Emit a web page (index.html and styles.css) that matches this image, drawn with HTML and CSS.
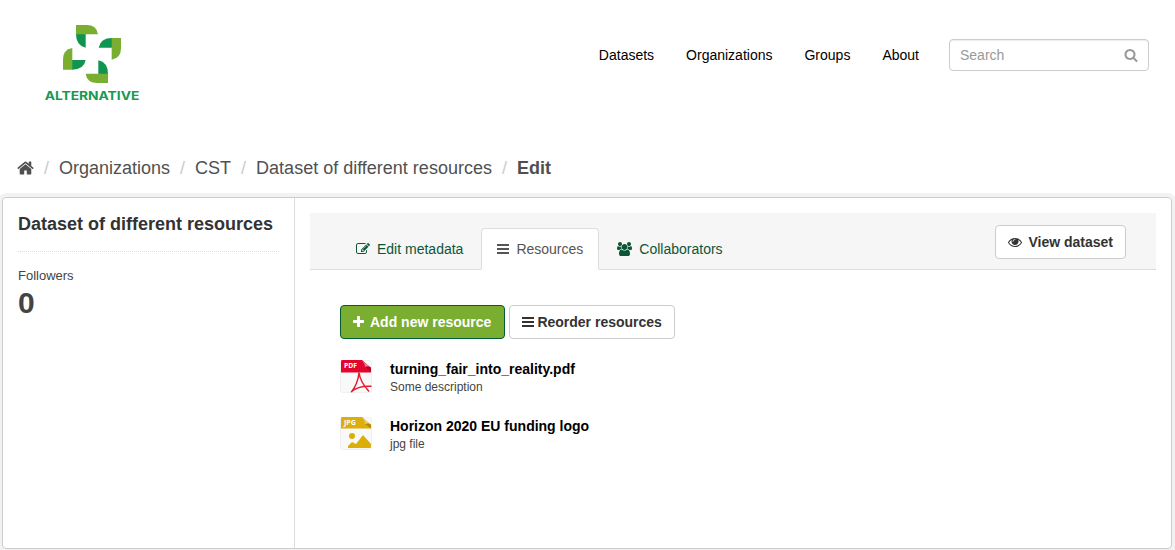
FILE: index.html
```html
<!DOCTYPE html>
<html lang="en">
<head>
<meta charset="utf-8">
<title>Dataset of different resources - Edit</title>
<link rel="stylesheet" href="styles.css">
</head>
<body>
<svg class="sprite" aria-hidden="true">
  <symbol id="home" viewBox="64 0 1664 1792"><path d="M1472 992v480q0 26-19 45t-45 19h-384v-384h-256v384h-384q-26 0-45-19t-19-45v-480q0-1 .5-3t.5-3l575-474 575 474q1 2 1 6zm223-69l-62 74q-8 9-21 11h-3q-13 0-21-7l-692-577-692 577q-12 8-24 7-13-2-21-11l-62-74q-8-10-7-23.5t11-21.5l719-599q32-26 76-26t76 26l244 204v-195q0-14 9-23t23-9h192q14 0 23 9t9 23v408l219 182q10 8 11 21.5t-7 23.5z"/></symbol>
  <symbol id="search" viewBox="0 0 1792 1792"><path d="M1216 832q0-185-131.5-316.5t-316.5-131.5-316.5 131.5-131.5 316.5 131.5 316.5 316.5 131.5 316.5-131.5 131.5-316.5zm512 832q0 52-38 90t-90 38q-54 0-90-38l-343-342q-179 124-399 124-143 0-273.5-55.5t-225-150-150-225-55.5-273.5 55.5-273.5 150-225 225-150 273.5-55.5 273.5 55.5 225 150 150 225 55.5 273.5q0 220-124 399l343 343q37 37 37 90z"/></symbol>
  <symbol id="eye" viewBox="0 0 1792 1792"><path d="M1664 960q-152-236-381-353 61 104 61 225 0 185-131.5 316.5t-316.5 131.5-316.5-131.5-131.5-316.5q0-121 61-225-229 117-381 353 133 205 333.5 326.5t434.5 121.5 434.5-121.5 333.5-326.5zm-720-384q0-20-14-34t-34-14q-125 0-214.5 89.5t-89.5 214.5q0 20 14 34t34 14 34-14 14-34q0-86 61-147t147-61q20 0 34-14t14-34zm848 384q0 34-20 69-140 230-376.5 368.5t-499.5 138.5-499.5-139-376.5-368q-20-35-20-69t20-69q140-229 376.5-368t499.5-139 499.5 139 376.5 368q20 35 20 69z"/></symbol>
  <symbol id="plus" viewBox="192 0 1408 1792"><path d="M1600 736v192q0 40-28 68t-68 28h-416v416q0 40-28 68t-68 28h-192q-40 0-68-28t-28-68v-416h-416q-40 0-68-28t-28-68v-192q0-40 28-68t68-28h416v-416q0-40 28-68t68-28h192q40 0 68 28t28 68v416h416q40 0 68 28t28 68z"/></symbol>
  <symbol id="bars" viewBox="0 0 12 14"><path d="M0 2h12v2H0zM0 6h12v2H0zM0 10h12v2H0z"/></symbol>
  <symbol id="edit" viewBox="0 0 1792 1792"><path d="M888 1184l116-116-152-152-116 116v56h96v96h56zm440-720q-16-16-33 1l-350 350q-17 17-1 33t33-1l350-350q17-17 1-33zm80 594v190q0 119-84.5 203.5t-203.5 84.5h-832q-119 0-203.5-84.5t-84.5-203.5v-832q0-119 84.5-203.5t203.5-84.5h832q63 0 117 25 15 7 18 23 3 17-9 29l-49 49q-14 14-32 8-23-6-45-6h-832q-66 0-113 47t-47 113v832q0 66 47 113t113 47h832q66 0 113-47t47-113v-126q0-13 9-22l64-64q15-15 35-7t20 29zm-96-738l288 288-672 672h-288v-288zm444 132l-92 92-288-288 92-92q28-28 68-28t68 28l152 152q28 28 28 68t-28 68z"/></symbol>
  <symbol id="users" viewBox="64 0 1920 1792"><path d="M657 896q-162 5-265 128h-134q-82 0-138-40.5t-56-118.5q0-353 124-353 6 0 43.5 21t97.5 42.5 119 21.5q67 0 133-23-5 37-5 66 0 139 81 256zm1071 637q0 120-73 189.5t-194 69.5h-874q-121 0-194-69.5t-73-189.5q0-53 3.5-103.5t14-109 26.5-108.5 43-97.5 62-81 85.5-53.5 111.5-20q10 0 43 21.5t73 48 107 48 135 21.5 135-21.5 107-48 73-48 43-21.5q61 0 111.5 20t85.5 53.5 62 81 43 97.5 26.5 108.5 14 109 3.5 103.5zm-1024-1277q0 106-75 181t-181 75-181-75-75-181 75-181 181-75 181 75 75 181zm704 384q0 159-112.5 271.5t-271.5 112.5-271.5-112.5-112.5-271.5 112.5-271.5 271.5-112.5 271.5 112.5 112.5 271.5zm576 225q0 78-56 118.5t-138 40.5h-134q-103-123-265-128 81-117 81-256 0-29-5-66 66 23 133 23 59 0 119-21.5t97.5-42.5 43.5-21q124 0 124 353zm-128-609q0 106-75 181t-181 75-181-75-75-181 75-181 181-75 181 75 75 181z"/></symbol>
</svg>

<header class="masthead">
  <a class="logo">
    <svg width="120" height="95" viewBox="0 0 360 285" role="img" aria-label="Alternative">
      <g fill="#0f9550">
        <path d="M123 57h29v41q-29-6-29-41z"/>
        <path d="M231 69v29h-40q5-29 40-29z"/>
        <path d="M219 177h-29v-41q29 6 29 41z"/>
        <path d="M111 164v-29h41q-5 29-41 29z"/>
      </g>
      <g fill="#7aae30">
        <path d="M123 30h32q30 0 34 28h-66z"/>
        <path d="M258 69v31q0 30-28 34v-65z"/>
        <path d="M219 204h-32q-31 0-35-28h67z"/>
        <path d="M84 164v-31q0-29 28-34v65z"/>
      </g>
      <text class="logo-text" x="29" y="255" textLength="284" lengthAdjust="spacingAndGlyphs">ALTERNATIVE</text>
    </svg>
  </a>
  <nav class="nav">
    <a>Datasets</a><a>Organizations</a><a>Groups</a><a>About</a>
  </nav>
  <div class="search"><span>Search</span><svg class="icon"><use href="#search"/></svg></div>
</header>

<ol class="breadcrumb">
  <li><svg class="icon icon-home"><use href="#home"/></svg></li>
  <li>Organizations</li>
  <li>CST</li>
  <li>Dataset of different resources</li>
  <li class="active">Edit</li>
</ol>

<div class="wrapper">
  <aside class="sidebar">
    <h1>Dataset of different resources</h1>
    <dl>
      <dt>Followers</dt>
      <dd>0</dd>
    </dl>
  </aside>
  <main class="primary">
    <div class="page-header">
      <div class="tabs">
        <a class="tab"><svg class="icon"><use href="#edit"/></svg>Edit metadata</a>
        <a class="tab tab-active"><svg class="icon icon-bars"><use href="#bars"/></svg>Resources</a>
        <a class="tab"><svg class="icon icon-users"><use href="#users"/></svg>Collaborators</a>
      </div>
      <a class="btn btn-view"><svg class="icon"><use href="#eye"/></svg>View dataset</a>
    </div>
    <div class="content">
      <div class="actions">
        <a class="btn btn-primary"><svg class="icon icon-plus"><use href="#plus"/></svg>Add new resource</a>
        <a class="btn btn-reorder"><svg class="icon icon-bars"><use href="#bars"/></svg>Reorder resources</a>
      </div>
      <ul class="resources">
        <li>
          <svg class="file" viewBox="0 0 32 33">
            <rect x=".5" y=".5" width="31" height="32" rx="2" fill="#f9f9f9" stroke="#f0f0f0"/>
            <path d="M2 0h20l9 8v4.500H1V1.500q0-1.500 1-1.500z" fill="#e2062c"/>
            <path d="M21 0l10 7.500q-2-1.500-6-.5 0-4-4-7z" fill="#e8808f"/>
            <path d="M25 7q4-1 6 .5v4.500z" fill="#b80524"/>
            <text class="file-type" x="4" y="7.800" textLength="13" lengthAdjust="spacingAndGlyphs">PDF</text>
            <path d="M19 12.500q1 9 10 19M19 12.500q-1 11-7.500 19.500M11 31.800q8-6.500 20.500-5.500" fill="none" stroke="#e41c30" stroke-width="1.500"/>
          </svg>
          <div><a>turning_fair_into_reality.pdf</a><p>Some description</p></div>
        </li>
        <li>
          <svg class="file" viewBox="0 0 32 33">
            <rect x=".5" y=".5" width="31" height="32" rx="2" fill="#f9f9f9" stroke="#f0f0f0"/>
            <path d="M2 0h20l9 8v3.500H1V1.500q0-1.500 1-1.500z" fill="#dcae08"/>
            <path d="M21 0l10 7.500q-2-1.500-6-.5 0-4-4-7z" fill="#e9cf74"/>
            <path d="M25 7q4-1 6 .5v4z" fill="#b48d05"/>
            <text class="file-type" x="4" y="7.800" textLength="12" lengthAdjust="spacingAndGlyphs">JPG</text>
            <circle cx="12" cy="19" r="3" fill="#dcae08"/>
            <path d="M8 31v-2l4-4 4 2 7-9 8 9v3q0 1-1 1z" fill="#dcae08"/>
          </svg>
          <div><a>Horizon 2020 EU funding logo</a><p>jpg file</p></div>
        </li>
      </ul>
    </div>
  </main>
</div>
</body>
</html>
```

FILE: styles.css
```css
* { box-sizing: border-box; }
body {
  margin: 0;
  height: 550px;
  overflow: hidden;
  background: #fff;
  color: #444;
  font: 14px/20px "Liberation Sans", Arial, sans-serif;
}
h1, p, dl, dd, ul, ol { margin: 0; padding: 0; list-style: none; }
.sprite { display: none; }
.icon { width: 14px; height: 14px; fill: currentColor; flex: none; }

.masthead {
  display: flex;
  align-items: flex-start;
  height: 145px;
  padding: 15px 26px 0 35px;
}
.logo { display: block; height: 95px; }
.logo svg { display: block; }
.logo-text { font: 700 34px Inter, sans-serif; fill: #189a52; }
.nav {
  display: flex;
  gap: 32px;
  margin-left: auto;
  padding-top: 30px;
  color: #000;
}
.search {
  display: flex;
  align-items: center;
  justify-content: space-between;
  width: 200px;
  height: 32px;
  margin: 24px 0 0 30px;
  padding: 0 10px;
  border: 1px solid #ccc;
  border-radius: 4px;
  box-shadow: inset 0 1px 1px rgba(0, 0, 0, .075);
  color: #999;
}

.breadcrumb {
  display: flex;
  height: 52px;
  padding: 13px 0 0 17px;
  color: #505050;
  font-size: 18px;
}
.breadcrumb li { display: flex; }
.breadcrumb li + li::before {
  content: "/";
  padding: 0 10px;
  color: #ccc;
  font-weight: normal;
}
.breadcrumb .active { font-weight: bold; }
.icon-home { width: 17px; height: 18px; margin-top: 1px; }

.wrapper {
  display: flex;
  width: 1170px;
  height: 352px;
  margin-left: 2px;
  border: 1px solid #ccc;
  border-radius: 4px;
  box-shadow: 0 0 0 4px rgba(0, 0, 0, .05);
}
.sidebar {
  width: 292px;
  padding: 15px 15px 0;
  border-right: 1px solid #ddd;
}
.sidebar h1 {
  height: 39px;
  border-bottom: 1px dotted #ddd;
  color: #333;
  font-size: 18px;
  line-height: 23px;
  white-space: nowrap;
}
.sidebar dl { padding-top: 14px; }
.sidebar dt { font-size: 13px; line-height: 20px; }
.sidebar dd { font-size: 30px; font-weight: bold; line-height: 34px; }

.primary { flex: 1; padding: 15px 15px 0; }
.page-header {
  display: flex;
  justify-content: space-between;
  align-items: flex-start;
  height: 57px;
  padding: 0 30px;
  border-bottom: 1px solid #ddd;
  background: #f6f6f6;
}
.tabs { display: flex; gap: 2px; padding-top: 15px; }
.tab {
  display: flex;
  align-items: center;
  height: 42px;
  padding: 0 15px;
  border: 1px solid transparent;
  color: #0d5535;
}
.tab .icon { margin-right: 7px; }
.tab .icon-users { width: 15px; }
.tab-active {
  border-color: #ddd;
  border-bottom-color: #fff;
  border-radius: 4px 4px 0 0;
  background: #fff;
  color: #555;
}

.btn {
  display: flex;
  align-items: center;
  height: 34px;
  padding: 0 12px;
  border: 1px solid #ccc;
  border-radius: 4px;
  background: #fff;
  color: #333;
  font-weight: bold;
}
.btn .icon { margin-right: 6px; }
.icon-bars { width: 12px; }
.icon-plus { width: 11px; }
.btn-view { margin-top: 12px; }
.btn-primary {
  padding-right: 13px;
  border-color: #045c34;
  background: #7aae30;
  color: #fff;
}
.btn-reorder .icon { margin-right: 3px; }

.content { padding: 35px 30px; }
.actions { display: flex; gap: 4px; }
.resources { padding-top: 20px; }
.resources li { display: flex; gap: 18px; height: 57px; }
.resources a { color: #000; font-weight: bold; }
.resources p { padding-top: 1px; font-size: 12px; line-height: 15px; }
.resources li > div { display: flex; flex-direction: column; }
.file { width: 32px; height: 33px; margin-top: 1px; }
.file-type { font: bold 6.500px "Open Sans", sans-serif; fill: #fff; }
```
